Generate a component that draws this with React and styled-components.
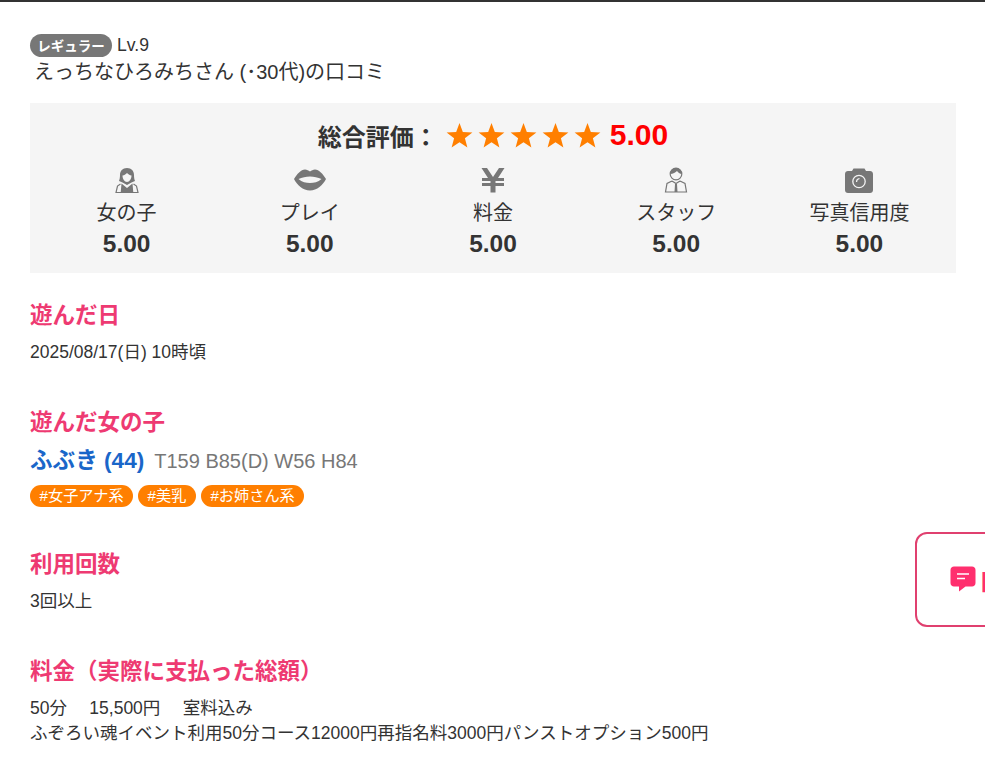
import React from 'react'
import styled, { createGlobalStyle } from 'styled-components'

const GlobalStyle = createGlobalStyle`
  html, body {
    margin: 0;
    padding: 0;
    background: #fff;
    overflow: hidden;
  }
  body {
    font-family: "Liberation Sans", "Noto Sans CJK JP", sans-serif;
    color: #333;
  }
`

const Page = styled.div`
  height: 776px;
  border-top: 2px solid #333;
  padding: 31px 29px 0 30px;
  box-sizing: border-box;
  overflow: hidden;
`

const UserLine = styled.div`
  display: flex;
  align-items: center;
  gap: 5px;
  height: 24px;
`

const RankBadge = styled.span`
  display: flex;
  align-items: center;
  justify-content: center;
  width: 82px;
  height: 23px;
  border-radius: 12px;
  background: #777;
  color: #fff;
  font-size: 13.5px;
  font-weight: bold;
`

const Level = styled.span`
  font-size: 17.6px;
`

const ReviewTitle = styled.h1`
  margin: 2px 0 17px 4px;
  font-size: 20px;
  line-height: 27px;
  font-weight: normal;
`

const ScorePanel = styled.section`
  background: #f5f5f5;
  height: 170px;
  padding: 13px 5px 0;
  box-sizing: border-box;
`

const TotalRow = styled.div`
  display: flex;
  align-items: center;
  justify-content: center;
  height: 38px;
  font-size: 24px;
  font-weight: bold;
`

const Stars = styled.span`
  display: flex;
  gap: 5px;
  margin: 0 9px 0 8px;
`

const TotalValue = styled.span`
  color: #f00;
  font-size: 30px;
`

const ScoreGrid = styled.div`
  display: grid;
  grid-template-columns: repeat(5, 1fr);
  margin-top: 12px;
`

const ScoreItem = styled.div`
  display: flex;
  flex-direction: column;
  align-items: center;
`

const IconSlot = styled.div`
  height: 28px;
  display: flex;
  align-items: center;
  justify-content: center;
`

const ScoreLabel = styled.div`
  font-size: 20px;
  line-height: 30px;
  margin-top: 4px;
`

const ScoreValue = styled.div`
  font-size: 24.5px;
  font-weight: bold;
  line-height: 32px;
`

const Section = styled.section`
  margin-top: ${p => p.$top}px;
`

const SectionTitle = styled.h2`
  margin: 0;
  color: #ee3a72;
  font-size: 22.5px;
  line-height: 32px;
  font-weight: bold;
`

const BodyText = styled.p`
  margin: 8px 0 0;
  font-size: 17.5px;
  line-height: 25px;
  white-space: pre-wrap;
`

const GirlLine = styled.div`
  display: flex;
  align-items: baseline;
  gap: 10px;
  margin-top: 6px;
  line-height: 32px;
`

const GirlName = styled.a`
  color: #1a66c9;
  font-size: 22.6px;
  font-weight: bold;
`

const GirlSpec = styled.span`
  color: #777;
  font-size: 20px;
`

const TagRow = styled.div`
  display: flex;
  gap: 5px;
  margin-top: 8px;
`

const Tag = styled.span`
  background: #ff7f00;
  color: #fff;
  font-size: 15.2px;
  line-height: 22px;
  border-radius: 11px;
  padding: 0 9.5px;
`

const FloatButton = styled.a`
  position: absolute;
  left: 915px;
  top: 532px;
  width: 150px;
  height: 95px;
  box-sizing: border-box;
  border: 2px solid #e0406f;
  border-radius: 12px;
  background: #fff;
  display: flex;
  align-items: center;
  gap: 4px;
  padding-left: 33px;
  color: #ff2f6e;
  font-size: 24px;
  font-weight: bold;
  white-space: nowrap;
`

const ChatSvg = styled.svg`
  flex-shrink: 0;
  margin-top: -1px;
`

const Star = () => (
  <svg width="27" height="27" viewBox="0 0 26 26">
    <path fill="#ff7f00" d="M13 1l3.2 8.6 9.2.4-7.200 5.700 2.400 8.800L13 19.500l-7.600 5 2.400-8.800L.6 10l9.200-.4z" />
  </svg>
)

const GirlIcon = () => (
  <svg width="24" height="26" viewBox="0 0 24 26">
    <path fill="#777" d="M12 1C7.500 1 5 4 5 8c0 2.500-.4 4.500-1 6l3.500 1.500L12 18l4.500-2.500L20 14c-.6-1.500-1-3.500-1-6 0-4-2.500-7-7-7z" />
    <path fill="#f5f5f5" d="M7.500 8.500c2-.3 3.500-1.300 4.500-2.500 1 1.200 2.500 2.200 4.500 2.500 0 3.500-2 6.500-4.500 6.500s-4.500-3-4.500-6.500z" />
    <path fill="none" stroke="#777" strokeWidth="1.200" d="M5.500 17L2.500 19 1 25.500h22L21.500 19l-3-2" />
    <path fill="#777" d="M6.500 16.500L12 21l5.500-4.500.8 9H5.700z" />
  </svg>
)

const LipsIcon = () => (
  <svg width="32" height="22" viewBox="0 0 32 22">
    <path
      fill="#777"
      fillRule="evenodd"
      d="M0 10C3 5 7 .5 11 .5c2 0 3.500 1 5 2 1.500-1 3-2 5-2 4 0 8 4.500 11 9.500-3 6-9 11.500-16 11.500S3 16 0 10zM4.500 10c3.500 3 7.500 4 11.500 4s8-1 11.500-4c-3.500-1.500-7.500-2.500-11.500-2.500S8 8.500 4.500 10z"
    />
  </svg>
)

const YenIcon = () => (
  <svg width="24" height="26" viewBox="0 0 24 26" fill="#777">
    <path d="M.5 1h5.500L12 10 18 1h5.500L17 11h6v3h-8.500v2H23v3h-8.500v6.500h-5V19H1v-3h8.500v-2H1v-3h6z" />
  </svg>
)

const StaffIcon = () => (
  <svg width="24" height="26" viewBox="0 0 24 26">
    <circle cx="12" cy="7" r="5.800" fill="none" stroke="#777" strokeWidth="1.200" />
    <path fill="#777" d="M6.200 7C6.500 3.200 9 1 12 1s5.500 2.200 5.800 6c-2-.2-3.800-1.500-4.800-3-1.300 1.600-4 2.800-6.800 3z" />
    <path fill="none" stroke="#777" strokeWidth="1.200" d="M8 14l-5 2.500L1.500 25h21L21 16.500 16 14M8 14l4 2.500 4-2.500" />
    <path fill="#777" d="M11 17h2l.5 8h-3z" />
  </svg>
)

const CameraIcon = () => (
  <svg width="28" height="25" viewBox="0 0 28 25">
    <path fill="#777" d="M3 3h4l1.500-2.500h11L21 3h4c1.700 0 3 1.300 3 3v16c0 1.700-1.300 3-3 3H3c-1.700 0-3-1.300-3-3V6c0-1.700 1.300-3 3-3z" />
    <circle cx="14" cy="13.500" r="6.200" fill="none" stroke="#f5f5f5" strokeWidth="1.300" />
    <path fill="none" stroke="#f5f5f5" strokeWidth="1.200" d="M11.500 14c0-2 1-3.200 3-3.500" />
  </svg>
)

const ChatIcon = () => (
  <ChatSvg width="26" height="26" viewBox="0 0 26 26">
    <path fill="#ff2f6e" d="M4 .5h18c2 0 3.500 1.500 3.500 3.500v13c0 2-1.500 3.500-3.500 3.500h-6.500L9 25.500v-5H4C2 20.500.5 19 .5 17V4C.5 2 2 .5 4 .5z" />
    <path stroke="#fff" strokeWidth="1.600" d="M7 8h12M7 12.500h8" />
  </ChatSvg>
)

const scores = [
  { label: '女の子', icon: <GirlIcon /> },
  { label: 'プレイ', icon: <LipsIcon /> },
  { label: '料金', icon: <YenIcon /> },
  { label: 'スタッフ', icon: <StaffIcon /> },
  { label: '写真信用度', icon: <CameraIcon /> },
]

const tags = ['#女子アナ系', '#美乳', '#お姉さん系']

const App = () => {
  return (
    <Page>
      <GlobalStyle />
      <UserLine>
        <RankBadge>レギュラー</RankBadge>
        <Level>Lv.9</Level>
      </UserLine>
      <ReviewTitle>えっちなひろみちさん (･30代)の口コミ</ReviewTitle>

      <ScorePanel>
        <TotalRow>
          総合評価：
          <Stars>
            {[0, 1, 2, 3, 4].map(i => <Star key={i} />)}
          </Stars>
          <TotalValue>5.00</TotalValue>
        </TotalRow>
        <ScoreGrid>
          {scores.map(s => (
            <ScoreItem key={s.label}>
              <IconSlot>{s.icon}</IconSlot>
              <ScoreLabel>{s.label}</ScoreLabel>
              <ScoreValue>5.00</ScoreValue>
            </ScoreItem>
          ))}
        </ScoreGrid>
      </ScorePanel>

      <Section $top={27}>
        <SectionTitle>遊んだ日</SectionTitle>
        <BodyText>2025/08/17(日) 10時頃</BodyText>
      </Section>

      <Section $top={42}>
        <SectionTitle>遊んだ女の子</SectionTitle>
        <GirlLine>
          <GirlName>ふぶき (44)</GirlName>
          <GirlSpec>T159 B85(D) W56 H84</GirlSpec>
        </GirlLine>
        <TagRow>
          {tags.map(t => <Tag key={t}>{t}</Tag>)}
        </TagRow>
      </Section>

      <Section $top={42}>
        <SectionTitle>利用回数</SectionTitle>
        <BodyText>3回以上</BodyText>
      </Section>

      <Section $top={42}>
        <SectionTitle>料金（実際に支払った総額）</SectionTitle>
        <BodyText>{'50分　 15,500円　 室料込み\nふぞろい魂イベント利用50分コース12000円再指名料3000円パンストオプション500円'}</BodyText>
      </Section>

      <FloatButton>
        <ChatIcon />
        口コミ
      </FloatButton>
    </Page>
  )
}

export default App
